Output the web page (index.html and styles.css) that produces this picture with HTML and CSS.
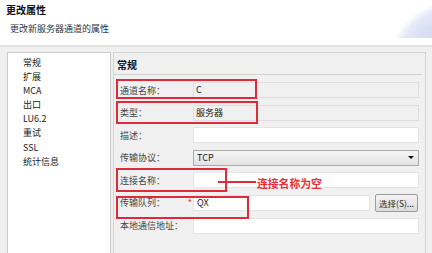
FILE: index.html
```html
<!DOCTYPE html>
<html lang="zh-CN">
<head>
<meta charset="utf-8">
<title>更改属性</title>
<link rel="stylesheet" href="styles.css">
</head>
<body>
<div class="window">
  <div class="header">
    <div class="title">更改属性</div>
    <div class="subtitle">更改新服务器通道的属性</div>
  </div>
  <div class="main">
    <ul class="nav">
      <li>常规</li>
      <li>扩展</li>
      <li>MCA</li>
      <li>出口</li>
      <li>LU6.2</li>
      <li>重试</li>
      <li>SSL</li>
      <li>统计信息</li>
    </ul>
    <div class="panel">
      <div class="panel-title">常规</div>
      <div class="form">
        <div class="row"><div class="label">通道名称：</div><div class="field readonly">C</div></div>
        <div class="row"><div class="label">类型：</div><div class="field readonly">服务器</div></div>
        <div class="row"><div class="label">描述：</div><div class="field input"></div></div>
        <div class="row"><div class="label">传输协议：</div><div class="field select"><span>TCP</span><span class="arrow"></span></div></div>
        <div class="row"><div class="label">连接名称：</div><div class="field input"></div></div>
        <div class="row"><div class="label">传输队列：<span class="star">*</span></div><div class="field input short">QX</div><div class="btn">选择(S)...</div></div>
        <div class="row"><div class="label">本地通信地址：</div><div class="field input"></div></div>
      </div>
      <div class="mark mark1"></div>
      <div class="mark mark2"></div>
      <div class="mark mark3"></div>
      <div class="mark mark4"></div>
      <div class="mark-line"></div>
      <div class="mark-text">连接名称为空</div>
    </div>
  </div>
</div>
</body>
</html>
```
FILE: styles.css
```css
* { box-sizing: border-box; }
html, body { margin: 0; padding: 0; }
body {
  width: 432px;
  height: 253px;
  overflow: hidden;
  background: #f0f0f0;
  font-family: "Noto Sans CJK SC", "Noto Sans", sans-serif;
  color: #2a2a2a;
}
.window { width: 432px; height: 253px; display: flex; flex-direction: column; }
.header {
  height: 47px;
  flex: none;
  padding: 3px 6px 0 6px;
  border-bottom: 2px solid #e2e2e2;
  background:
    radial-gradient(ellipse 62px 56px at 68px 58px, #c9d1ee 0, #d8def3 40px, #e4e8f7 54px, rgba(255,255,255,0) 63px) no-repeat right top / 46px 38px,
    #ffffff;
}
.title { font-size: 10px; font-weight: bold; line-height: 14px; color: #111; }
.subtitle { font-size: 9px; line-height: 12px; margin: 6px 0 0 4px; color: #333; }
.main { flex: 1; display: flex; gap: 2px; padding: 5px 6px 0 7px; min-height: 0; }
.nav {
  list-style: none;
  margin: 0;
  padding: 3px 0 0 15px;
  width: 104px;
  background: #fff;
  border: 1px solid #cbcbcb;
  border-bottom: none;
}
.nav li { font-size: 9px; line-height: 14.1px; color: #222; }
.panel {
  position: relative;
  width: 313px;
  border: 1px solid #d4d4d4;
  border-bottom: none;
}
.panel-title {
  font-size: 10px;
  font-weight: bold;
  line-height: 14px;
  padding: 5px 0 2px 3px;
  margin-right: 3px;
  border-bottom: 1px solid #d2d2d2;
  color: #111;
}
.form { display: flex; flex-direction: column; gap: 6.6px; padding: 7px 6px 0 6px; }
.row { display: flex; align-items: center; height: 16px; }
.label {
  width: 73px;
  flex: none;
  font-size: 9px;
  color: #444;
  display: flex;
  justify-content: space-between;
  padding-right: 1px;
}
.star { color: #e0303a; font-size: 9px; }
.field {
  flex: 1;
  height: 16px;
  font-size: 9px;
  line-height: 14px;
  padding-left: 2px;
  color: #222;
}
.readonly { background: #f0f0f0; border: 1px solid #dedede; }
.input { background: #fff; border: 1px solid #e4e4e4; }
.input.short { flex: none; width: 177px; padding-left: 3px; }
.select {
  display: flex;
  justify-content: space-between;
  align-items: center;
  border: 1px solid #ababab;
  background: linear-gradient(#f6f6f6, #e2e2e2);
  padding: 0 4px 0 3px;
}
.arrow {
  width: 0; height: 0;
  border-left: 3px solid transparent;
  border-right: 3px solid transparent;
  border-top: 3px solid #111;
}
.btn {
  flex: none;
  margin-left: 5px;
  width: 43px;
  height: 18px;
  font-size: 8.5px;
  line-height: 16px;
  text-align: center;
  color: #222;
  border: 1px solid #9c9c9c;
  border-radius: 2px;
  background: linear-gradient(#f4f4f4, #dcdcdc);
}
.mark { position: absolute; border: 2px solid #df2a3a; }
.mark1 { left: 2px; top: 26px; width: 141px; height: 20px; }
.mark2 { left: 2px; top: 48px; width: 142px; height: 23px; }
.mark3 { left: 2px; top: 115px; width: 111px; height: 24px; }
.mark4 { left: 2px; top: 143px; width: 133px; height: 23px; }
.mark-line { position: absolute; left: 104px; top: 128px; width: 38px; height: 2px; background: #df2a3a; }
.mark-text {
  position: absolute;
  left: 143px;
  top: 123px;
  font-size: 10.8px;
  line-height: 14px;
  font-weight: bold;
  color: #e5303c;
  white-space: nowrap;
}
```
